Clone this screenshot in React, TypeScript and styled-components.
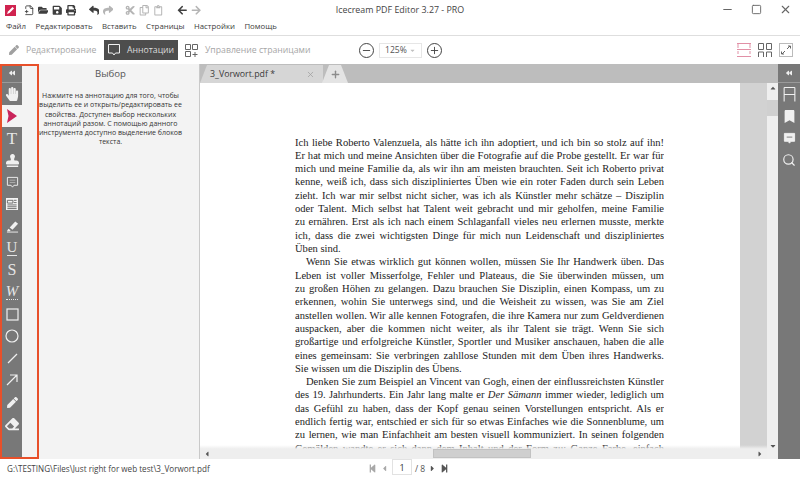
import React from "react";
import styled, { createGlobalStyle } from "styled-components";
import {
  FaArrowLeft,
  FaArrowRight,
  FaBackward,
  FaBookmark,
  FaCut,
  FaEraser,
  FaFolderOpen,
  FaHandPaper,
  FaPen,
  FaPrint,
  FaRegClipboard,
  FaRegCopy,
  FaReply,
  FaSave,
  FaShare,
  FaStamp,
  FaStepBackward,
  FaStepForward,
  FaCaretLeft,
  FaCaretRight,
  FaCaretUp,
  FaCaretDown,
} from "react-icons/fa";
import { LuFilePlus2, LuMinus, LuSearch, LuSquare, LuX, LuPlus } from "react-icons/lu";

const GlobalStyle = createGlobalStyle`
  html, body { margin: 0; padding: 0; background: #fff; }
  body { font-family: "Open Sans", "Noto Sans", sans-serif; overflow: hidden; }
  * { box-sizing: border-box; }
`;

const Window = styled.div`
  width: 800px;
  height: 477px;
  display: flex;
  flex-direction: column;
  overflow: hidden;
  background: #fff;
`;

const TitleBar = styled.div`
  height: 19px;
  display: grid;
  grid-template-columns: 1fr auto 1fr;
  align-items: center;
`;

const QuickBar = styled.div`
  display: flex;
  align-items: center;
  padding-left: 5px;
  padding-top: 2px;
`;

const Logo = styled.svg`
  width: 11px;
  height: 11px;
  margin-right: 6px;
`;

const QuickIcon = styled.span<{ $off?: boolean; $gap?: number }>`
  width: 14px;
  display: flex;
  justify-content: center;
  font-size: 10.5px;
  margin-right: ${(p) => p.$gap ?? 0}px;
  color: ${(p) => (p.$off ? "#b5b5b5" : "#3f3f3f")};
`;

const Title = styled.div`
  font-size: 8.9px;
  color: #444;
`;

const WindowButtons = styled.div`
  display: flex;
  justify-content: flex-end;
  align-items: center;
  color: #666;
  padding-right: 8px;
  gap: 17px;
  font-size: 13px;
`;

const MenuBar = styled.div`
  height: 17px;
  display: flex;
  align-items: center;
  gap: 9.5px;
  padding: 0 0 2px 6px;
  border-bottom: 1px solid #dedede;
`;

const MenuItem = styled.span`
  font-size: 7.8px;
  color: #3c3c3c;
`;

const ToolBar = styled.div`
  height: 28px;
  display: flex;
  align-items: center;
  padding-left: 9px;
  padding-right: 7px;
`;

const ModeTab = styled.div<{ $active?: boolean; $width: number; $offset?: number }>`
  width: ${(p) => p.$width}px;
  height: 20px;
  margin-left: ${(p) => p.$offset ?? 0}px;
  display: flex;
  align-items: center;
  gap: ${(p) => (p.$active ? 6 : 7)}px;
  padding-left: ${(p) => (p.$active ? 3 : 0)}px;
  font-size: 8.7px;
  white-space: nowrap;
  background: ${(p) => (p.$active ? "#4d4d4d" : "transparent")};
  color: ${(p) => (p.$active ? "#dcdcdc" : "#a6a6a6")};
`;

const ZoomGroup = styled.div`
  display: flex;
  align-items: center;
  margin-left: 42px;
  gap: 5px;
`;

const RoundButton = styled.span`
  width: 15px;
  height: 15px;
  border: 1px solid #444;
  border-radius: 50%;
  display: flex;
  align-items: center;
  justify-content: center;
  color: #444;
  font-size: 11px;
`;

const ZoomSelect = styled.div`
  width: 43px;
  height: 15px;
  border: 1px solid #e6e6e6;
  display: flex;
  align-items: center;
  justify-content: space-between;
  padding: 0 5px;
  font-size: 8.6px;
  color: #555;
`;

const ViewIcons = styled.div`
  margin-left: auto;
  display: flex;
  gap: 7px;
`;

const Main = styled.div`
  position: relative;
  flex: 1;
  min-height: 0;
  display: flex;
`;

const Marker = styled.div`
  position: absolute;
  left: 0;
  top: 0;
  bottom: 0;
  width: 39px;
  border: 2px solid #e8502a;
  pointer-events: none;
`;

const Rail = styled.div<{ $right?: boolean }>`
  width: 22px;
  padding-left: ${(p) => (p.$right ? 0 : 2)}px;
  background: ${(p) => (p.$right ? "#787878" : "#f3f3f3")};
  display: flex;
  flex-direction: column;
  flex-shrink: 0;
`;

const Collapse = styled.div`
  height: 19px;
  background: #787878;
  border-bottom: 1px solid #9a9a9a;
  display: flex;
  align-items: center;
  justify-content: center;
  color: #eee;
  font-size: 6px;
`;

const RailButton = styled.div<{ $active?: boolean }>`
  height: 22px;
  background: ${(p) => (p.$active ? "#f3f3f3" : "#787878")};
  color: #f0f0f0;
  display: flex;
  align-items: center;
  justify-content: center;
  font-size: 13px;
`;

const RailFill = styled.div`
  flex: 1;
  background: #787878;
`;

const GlyphLetter = styled.span<{ $italic?: boolean; $line?: "solid" | "dotted"; $size?: number }>`
  font-family: "Liberation Serif", serif;
  font-size: ${(p) => p.$size ?? 15}px;
  line-height: ${(p) => p.$size ?? 15}px;
  color: #e6e6e6;
  font-style: ${(p) => (p.$italic ? "italic" : "normal")};
  border-bottom: ${(p) => (p.$line ? `1px ${p.$line} #e6e6e6` : "none")};
`;

const SidePanel = styled.div`
  width: 178px;
  flex-shrink: 0;
  background: #f3f3f3;
  border-right: 1px solid #c9c9c9;
  display: flex;
  flex-direction: column;
  align-items: center;
  padding-top: 3px;
`;

const PanelTitle = styled.div`
  font-size: 9.6px;
  line-height: 14px;
  color: #555;
  margin-bottom: 10px;
`;

const PanelText = styled.div`
  font-size: 7px;
  line-height: 9.3px;
  color: #333;
  text-align: center;
  white-space: nowrap;
`;

const Workspace = styled.div`
  flex: 1;
  min-width: 0;
  display: flex;
  flex-direction: column;
`;

const TabStrip = styled.div`
  height: 19px;
  background: #bdbdbd;
  display: flex;
  align-items: flex-end;
  flex-shrink: 0;
`;

const Tab = styled.div`
  width: 123px;
  height: 18px;
  background: #d6d6d6;
  clip-path: polygon(0 100%, 7px 0, 100% 0, 100% 100%);
  display: flex;
  align-items: center;
  justify-content: space-between;
  padding: 0 8px 0 10px;
  font-size: 8.8px;
  color: #3a3a3a;
`;

const AddTab = styled.div`
  width: 26px;
  height: 18px;
  margin-left: -1px;
  background: #e4e4e4;
  clip-path: polygon(0 100%, 7px 0, 19px 0, 100% 100%);
  display: flex;
  align-items: center;
  justify-content: center;
  font-size: 11px;
  color: #8c8c8c;
`;

const TabClose = styled.span`
  display: flex;
  color: #a0a0a0;
  font-size: 9px;
`;

const DocArea = styled.div`
  position: relative;
  flex: 1;
  min-height: 0;
  display: flex;
  overflow: hidden;
`;

const Sheet = styled.div`
  flex: 1;
  background: #fff;
  padding: 52.5px 0 0 95px;
`;

const PageMargin = styled.div`
  width: 27px;
  background: #d2d2d2;
`;

const VScroll = styled.div`
  width: 11px;
  background: #efefef;
  display: flex;
  flex-direction: column;
  align-items: center;
  color: #555;
  font-size: 8px;
  padding-top: 1px;
`;

const VThumb = styled.div`
  width: 100%;
  height: 16px;
  margin-top: 8px;
  background: #d0d0d0;
`;

const VArrowDown = styled.div`
  margin-top: auto;
  margin-bottom: 9px;
  display: flex;
`;

const Line = styled.div<{ $last?: boolean; $indent?: boolean }>`
  width: 369px;
  height: 13.32px;
  overflow: hidden;
  font-family: "Liberation Serif", serif;
  font-size: 10.55px;
  line-height: 13.32px;
  color: #1c1c1c;
  text-align: ${(p) => (p.$last ? "left" : "justify")};
  text-align-last: ${(p) => (p.$last ? "left" : "justify")};
  text-indent: ${(p) => (p.$indent ? 11 : 0)}px;
`;

const HScroll = styled.div`
  position: absolute;
  left: 0;
  right: 11px;
  bottom: 0;
  height: 14px;
  background: linear-gradient(to bottom, rgba(240, 240, 240, 0), #eeeeee 28%);
  display: flex;
  align-items: flex-end;
  padding: 0 3px 1px;
  color: #555;
  font-size: 8px;
`;

const HThumb = styled.div`
  width: 98px;
  height: 9px;
  margin-left: 222px;
  background: #cfcfcf;
  border: 1px solid #c2c2c2;
`;

const HArrowRight = styled.span`
  margin-left: auto;
  display: flex;
`;

const StatusBar = styled.div`
  height: 18px;
  display: flex;
  align-items: center;
  flex-shrink: 0;
`;

const FilePath = styled.div`
  width: 368px;
  padding-left: 7px;
  font-size: 8.1px;
  color: #444;
  white-space: nowrap;
`;

const Pager = styled.div`
  display: flex;
  align-items: center;
  gap: 3px;
  font-size: 8.5px;
  color: #555;
`;

const PagerButton = styled.span<{ $off?: boolean }>`
  display: flex;
  font-size: 9px;
  color: ${(p) => (p.$off ? "#a8a8a8" : "#555")};
`;

const PageInput = styled.div`
  width: 20px;
  height: 16px;
  margin-bottom: 2px;
  border: 1px solid #e2e2e2;
  display: flex;
  align-items: center;
  justify-content: center;
  font-size: 9px;
  color: #333;
`;

const CommentIcon = ({ size = 13, filled = false }: { size?: number; filled?: boolean }) => (
  <svg width={size} height={size} viewBox="0 0 14 14" fill={filled ? "#f0f0f0" : "none"} stroke="#f0f0f0" strokeWidth="1">
    <path d="M1.5 1.5h11v8.5h-4l-1.5 2-1.5-2h-4z" />
    {filled && <path d="M4 5.5h6" stroke="#787878" />}
    {!filled && <path d="M4 4.5h6M4 7h6" stroke="#c8c8c8" strokeWidth="0.7" />}
  </svg>
);

const LinesIcon = ({ color = "#f0f0f0", size = 14 }: { color?: string; size?: number }) => (
  <svg width={size} height={size} viewBox="0 0 14 14" fill="none" stroke={color} strokeWidth="1">
    <path d="M2 .5h10M2 .5v13M12 .5v13M2 7h10" />
  </svg>
);

const railItems: React.ReactNode[] = [
  <FaHandPaper key="hand" size={14} />,
  <svg key="select" width="10" height="14" viewBox="0 0 10 14"><path d="M0 0l10 7-10 7 1.500-7z" fill="#c9245a" /></svg>,
  <GlyphLetter key="t" $size={17}>T</GlyphLetter>,
  <FaStamp key="stamp" size={13} />,
  <CommentIcon key="note" />,
  <svg key="text" width="12" height="12" viewBox="0 0 13 13">
    <rect width="13" height="13" fill="#f4f4f4" />
    <path d="M1.5 2.5h6v3h-6zM8.5 2.5h3M8.5 5h3M1.5 7.5h10M1.5 9.5h10M1.5 11.5h10" stroke="#666" fill="none" />
  </svg>,
  <svg key="marker" width="13" height="13" viewBox="0 0 14 13" fill="#f0f0f0">
    <path d="M4 7.5L10 1l3 2.5-6 6.5zM2.5 9l2.5 1.500-1 1H1z" />
    <path d="M1 12.5h12" stroke="#f0f0f0" />
  </svg>,
  <GlyphLetter key="u" $line="solid">U</GlyphLetter>,
  <GlyphLetter key="s" $size={16}>S</GlyphLetter>,
  <GlyphLetter key="w" $italic $line="dotted">W</GlyphLetter>,
  <svg key="rect" width="13" height="13" viewBox="0 0 13 13"><rect x="1" y="1" width="11" height="11" fill="none" stroke="#f0f0f0" strokeWidth="1.2" /></svg>,
  <svg key="circle" width="14" height="14" viewBox="0 0 14 14"><circle cx="7" cy="7" r="6" fill="none" stroke="#f0f0f0" strokeWidth="1.2" /></svg>,
  <svg key="line" width="11" height="11" viewBox="0 0 11 11"><path d="M1 10L10 1" stroke="#f0f0f0" strokeWidth="1.2" /></svg>,
  <svg key="arrow" width="12" height="12" viewBox="0 0 12 12" fill="none" stroke="#f0f0f0" strokeWidth="1.2"><path d="M1 11L11 1M4 1h7v7" /></svg>,
  <FaPen key="pen" size={11} />,
  <FaEraser key="eraser" size={14} />,
];

const lines: { text: React.ReactNode; last?: boolean; indent?: boolean }[] = [
  { text: "Ich liebe Roberto Valenzuela, als hätte ich ihn adoptiert, und ich bin so stolz auf ihn!" },
  { text: "Er hat mich und meine Ansichten über die Fotografie auf die Probe gestellt. Er war für" },
  { text: "mich und meine Familie da, als wir ihn am meisten brauchten. Seit ich Roberto privat" },
  { text: "kenne, weiß ich, dass sich diszipliniertes Üben wie ein roter Faden durch sein Leben" },
  { text: "zieht. Ich war mir selbst nicht sicher, was ich als Künstler mehr schätze – Disziplin" },
  { text: "oder Talent. Mich selbst hat Talent weit gebracht und mir geholfen, meine Familie" },
  { text: "zu ernähren. Erst als ich nach einem Schlaganfall vieles neu erlernen musste, merkte" },
  { text: "ich, dass die zwei wichtigsten Dinge für mich nun Leidenschaft und diszipliniertes" },
  { text: "Üben sind.", last: true },
  { text: "Wenn Sie etwas wirklich gut können wollen, müssen Sie Ihr Handwerk üben. Das", indent: true },
  { text: "Leben ist voller Misserfolge, Fehler und Plateaus, die Sie überwinden müssen, um" },
  { text: "zu großen Höhen zu gelangen. Dazu brauchen Sie Disziplin, einen Kompass, um zu" },
  { text: "erkennen, wohin Sie unterwegs sind, und die Weisheit zu wissen, was Sie am Ziel" },
  { text: "anstellen wollen. Wir alle kennen Fotografen, die ihre Kamera nur zum Geldverdienen" },
  { text: "auspacken, aber die kommen nicht weiter, als ihr Talent sie trägt. Wenn Sie sich" },
  { text: "großartige und erfolgreiche Künstler, Sportler und Musiker anschauen, haben die alle" },
  { text: "eines gemeinsam: Sie verbringen zahllose Stunden mit dem Üben ihres Handwerks." },
  { text: "Sie wissen um die Disziplin des Übens.", last: true },
  { text: "Denken Sie zum Beispiel an Vincent van Gogh, einen der einflussreichsten Künstler", indent: true },
  { text: <>des 19. Jahrhunderts. Ein Jahr lang malte er <i>Der Sämann</i> immer wieder, lediglich um</> },
  { text: "das Gefühl zu haben, dass der Kopf genau seinen Vorstellungen entspricht. Als er" },
  { text: "endlich fertig war, entschied er sich für so etwas Einfaches wie die Sonnenblume, um" },
  { text: "zu lernen, wie man Einfachheit am besten visuell kommuniziert. In seinen folgenden" },
  { text: "Gemälden wandte er sich dann dem Inhalt und der Form zu: Ganze Farbe, einfach Licht" },
];

function App() {
  return (
    <Window>
      <GlobalStyle />
      <TitleBar>
        <QuickBar>
          <Logo viewBox="0 0 11 11">
            <rect width="11" height="11" fill="#d0234f" />
            <path d="M2 9l1-2.5L7.5 2 9 3.5 4.500 8z" fill="#fff" />
          </Logo>
          <QuickIcon><LuFilePlus2 /></QuickIcon>
          <QuickIcon><FaFolderOpen /></QuickIcon>
          <QuickIcon><FaSave /></QuickIcon>
          <QuickIcon $gap={9}><FaPrint /></QuickIcon>
          <QuickIcon><FaReply /></QuickIcon>
          <QuickIcon $off $gap={8}><FaShare /></QuickIcon>
          <QuickIcon $off><FaCut /></QuickIcon>
          <QuickIcon $off><FaRegCopy /></QuickIcon>
          <QuickIcon $off $gap={10}><FaRegClipboard /></QuickIcon>
          <QuickIcon><FaArrowLeft /></QuickIcon>
          <QuickIcon $off><FaArrowRight /></QuickIcon>
        </QuickBar>
        <Title>Icecream PDF Editor 3.27 - PRO</Title>
        <WindowButtons>
          <LuMinus />
          <LuSquare size={11} />
          <LuX />
        </WindowButtons>
      </TitleBar>

      <MenuBar>
        {["Файл", "Редактировать", "Вставить", "Страницы", "Настройки", "Помощь"].map((m) => (
          <MenuItem key={m}>{m}</MenuItem>
        ))}
      </MenuBar>

      <ToolBar>
        <ModeTab $width={95}>
          <FaPen size={10} color="#a0a0a0" />
          Редактирование
        </ModeTab>
        <ModeTab $active $width={74}>
          <svg width="14" height="14" viewBox="0 0 14 14" fill="none" stroke="#f0f0f0">
            <path d="M1.500 1.500h11v8.500h-4l-1.500 2-1.500-2h-4z" />
          </svg>
          Аннотации
        </ModeTab>
        <ModeTab $width={132} $offset={7}>
          <svg width="13" height="13" viewBox="0 0 13 13" fill="none" stroke="#666">
            <path d="M.5.500h5v5h-5zM7.500.500h5v5h-5zM.5 7.500h5v5h-5zM10 8v5M7.500 10.500h5" />
          </svg>
          Управление страницами
        </ModeTab>
        <ZoomGroup>
          <RoundButton><LuMinus /></RoundButton>
          <ZoomSelect>
            125%
            <FaCaretDown size={7} color="#c0c0c0" />
          </ZoomSelect>
          <RoundButton><LuPlus /></RoundButton>
        </ZoomGroup>
        <ViewIcons>
          <svg width="14" height="14" viewBox="0 0 14 14" fill="none" stroke="#d9748f">
            <path d="M0 .5h14M0 13.500h14M0 6.500h14M1 1v4M13 1v4M1 8v3M13 8v3" strokeWidth="0.8" />
          </svg>
          <svg width="14" height="14" viewBox="0 0 14 14" fill="none" stroke="#666">
            <path d="M.5.500h5v6h-5zM8.500.500h5v6h-5zM.5 14V9h5v5M8.500 14V9h5v5" />
          </svg>
          <svg width="14" height="14" viewBox="0 0 14 14" fill="none" stroke="#666">
            <rect x=".5" y=".5" width="13" height="13" stroke="#bbb" />
            <path d="M8 6l3-3M9 3h2.500v2.500M6 8l-3 3M5 11H2.500V8.500" />
          </svg>
        </ViewIcons>
      </ToolBar>

      <Main>
        <Rail>
          <Collapse><FaBackward /></Collapse>
          {railItems.map((icon, i) => (
            <RailButton key={i} $active={i === 1}>{icon}</RailButton>
          ))}
          <RailFill />
        </Rail>
        <SidePanel>
          <PanelTitle>Выбор</PanelTitle>
          <PanelText>
            Нажмите на аннотацию для того, чтобы<br />
            выделить ее и открыть/редактировать ее<br />
            свойства. Доступен выбор нескольких<br />
            аннотаций разом. С помощью данного<br />
            инструмента доступно выделение блоков<br />
            текста.
          </PanelText>
        </SidePanel>
        <Workspace>
          <TabStrip>
            <Tab>
              3_Vorwort.pdf *
              <TabClose><LuX /></TabClose>
            </Tab>
            <AddTab><LuPlus strokeWidth={3} /></AddTab>
          </TabStrip>
          <DocArea>
            <Sheet>
              {lines.map((l, i) => (
                <Line key={i} $last={l.last} $indent={l.indent}>{l.text}</Line>
              ))}
            </Sheet>
            <PageMargin />
            <VScroll>
              <FaCaretUp />
              <VThumb />
              <VArrowDown><FaCaretDown /></VArrowDown>
            </VScroll>
            <HScroll>
              <FaCaretLeft />
              <HThumb />
              <HArrowRight><FaCaretRight /></HArrowRight>
            </HScroll>
          </DocArea>
        </Workspace>
        <Rail $right>
          <Collapse><FaBackward /></Collapse>
          <RailButton><LinesIcon size={15} /></RailButton>
          <RailButton><FaBookmark size={13} /></RailButton>
          <RailButton><CommentIcon filled /></RailButton>
          <RailButton><LuSearch size={14} /></RailButton>
          <RailFill />
        </Rail>
        <Marker />
      </Main>

      <StatusBar>
        <FilePath>G:\TESTING\Files\Just right for web test\3_Vorwort.pdf</FilePath>
        <Pager>
          <PagerButton $off><FaStepBackward /></PagerButton>
          <PagerButton $off><FaCaretLeft /></PagerButton>
          <PageInput>1</PageInput>
          / 8
          <PagerButton><FaCaretRight /></PagerButton>
          <PagerButton><FaStepForward /></PagerButton>
        </Pager>
      </StatusBar>
    </Window>
  );
}

export default App;
